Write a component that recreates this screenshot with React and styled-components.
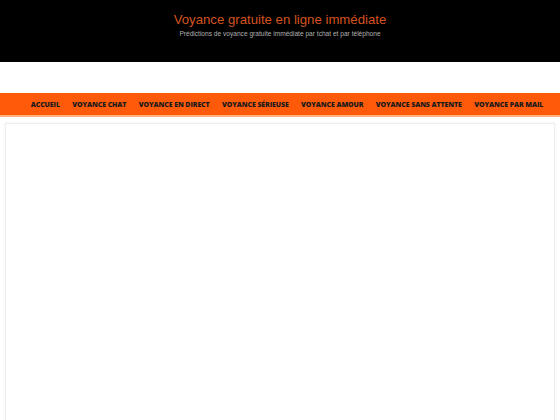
import React from "react";
import styled, { createGlobalStyle } from "styled-components";

const GlobalStyle = createGlobalStyle`
  html, body {
    margin: 0;
    padding: 0;
    background: #ffffff;
    font-family: "Liberation Sans", Arial, sans-serif;
  }
`

const Header = styled.header`
  background: #000000;
  height: 62px;
  display: flex;
  flex-direction: column;
  align-items: center;
  padding-top: 12px;
  box-sizing: border-box;
`
const SiteTitle = styled.h1`
  margin: 0;
  font-weight: normal;
  font-size: 13.2px;
  color: #d4531f;
  line-height: 16px;
`
const Tagline = styled.p`
  margin: 2px 0 0;
  font-size: 6.6px;
  color: #b0b0b0;
`
const Spacer = styled.div`
  height: 31px;
`
const Nav = styled.nav`
  background: #ff5a0a;
  border-bottom: 2px solid #ffb27c;
  height: 22px;
  display: flex;
  justify-content: center;
  align-items: center;
  padding-left: 14px;
`
const NavItem = styled.a`
  font-family: "Open Sans", sans-serif;
  font-weight: 800;
  font-size: 7px;
  color: #1a1a1a;
  text-transform: uppercase;
  padding: 0 6.2px;
  white-space: nowrap;
  letter-spacing: -0.1px;
`
const Main = styled.main`
  padding: 6px 5px 0;
`
const Card = styled.div`
  height: 300px;
  border: 1px solid #efefef;
  border-bottom: none;
  box-shadow: 0 0 3px rgba(0, 0, 0, 0.06);
  background: #fff;
`

const links = [
  "Accueil",
  "Voyance chat",
  "Voyance en direct",
  "Voyance sérieuse",
  "Voyance amour",
  "Voyance sans attente",
  "Voyance par mail",
];

const App = () => {
  return (
    <>
      <GlobalStyle />
      <Header>
        <SiteTitle>Voyance gratuite en ligne immédiate</SiteTitle>
        <Tagline>Prédictions de voyance gratuite immédiate par tchat et par téléphone</Tagline>
      </Header>
      <Spacer />
      <Nav>
        {links.map(l => (
          <NavItem key={l}>{l}</NavItem>
        ))}
      </Nav>
      <Main>
        <Card />
      </Main>
    </>
  );
};

export default App;
